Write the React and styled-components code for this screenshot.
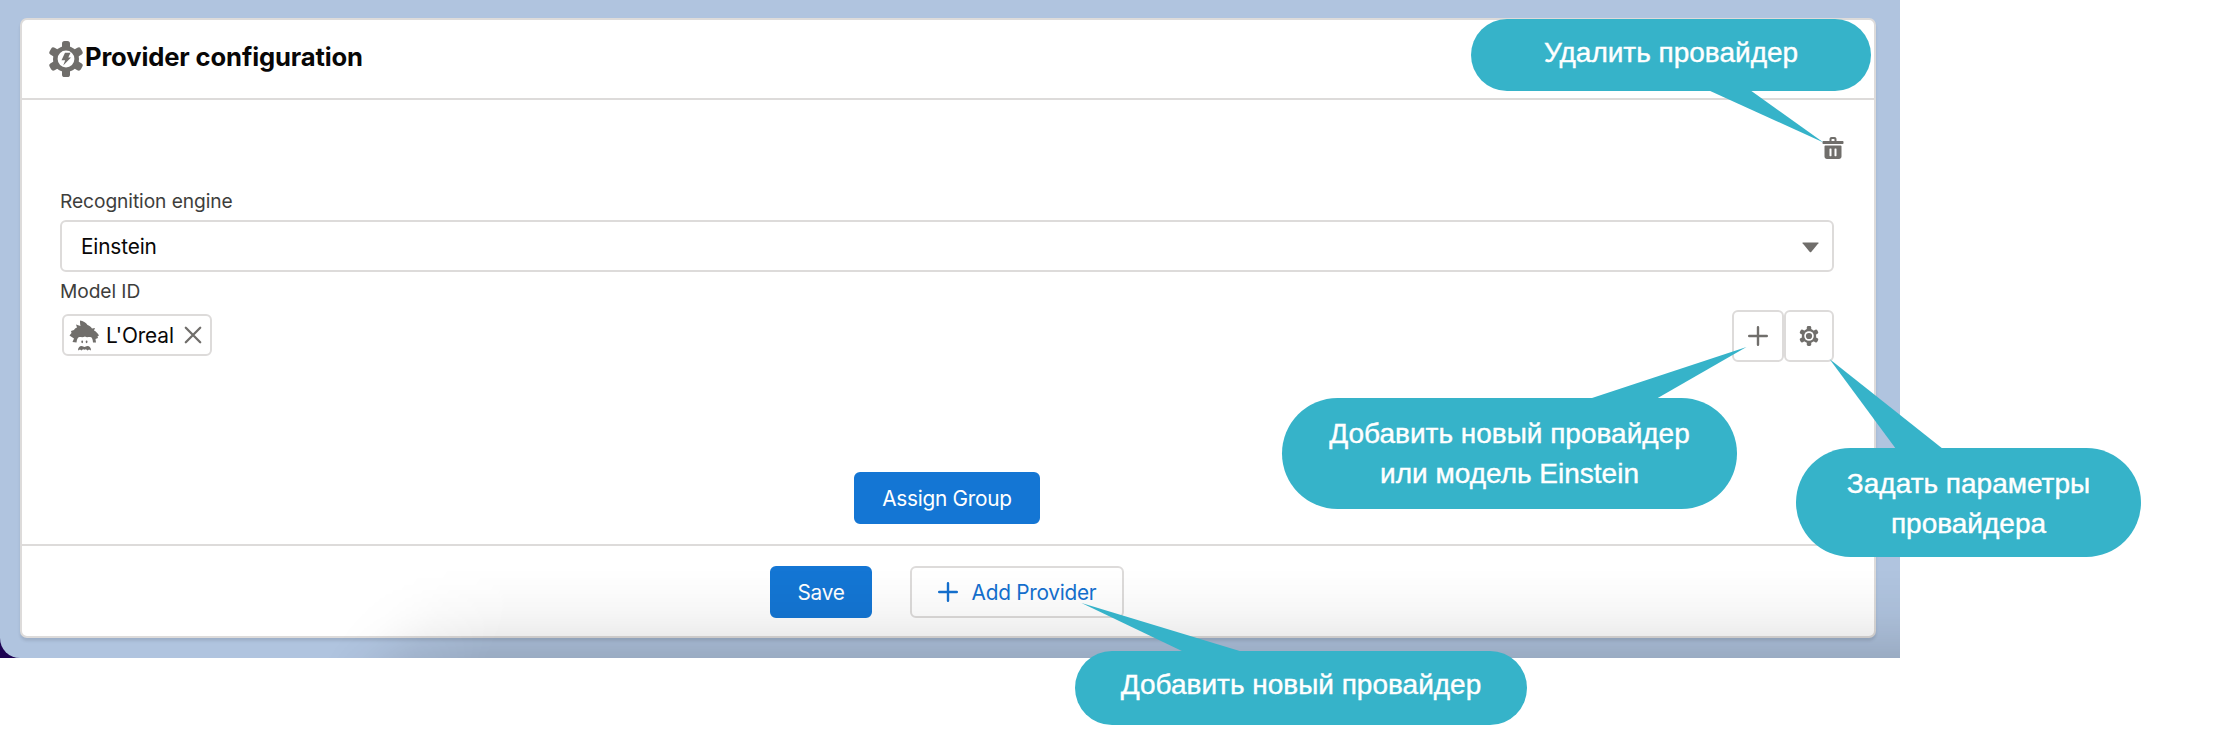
import React from "react";
import styled, { createGlobalStyle } from "styled-components";

const Global = createGlobalStyle`
  * { box-sizing: border-box; }
  body { margin: 0; background: #fff; }
`;

const Stage = styled.div`
  position: relative;
  width: 2222px;
  height: 752px;
  overflow: hidden;
  font-family: Inter, "Liberation Sans", sans-serif;
  color: #080707;
`;

const Backdrop = styled.div`
  position: relative;
  width: 1900px;
  height: 658px;
  background: #1d0352;
`;

const Page = styled.div`
  width: 1900px;
  height: 658px;
  padding: 18px 24px 20px 20px;
  background: #b0c4df;
  border-bottom-left-radius: 20px;
`;

const BottomShade = styled.div`
  position: absolute;
  left: 320px;
  right: 0;
  bottom: 0;
  height: 90px;
  background: linear-gradient(to bottom, rgba(0, 0, 0, 0), rgba(0, 0, 0, 0.012) 22%, rgba(0, 0, 0, 0.035) 50%, rgba(0, 0, 0, 0.075) 76%, rgba(0, 0, 0, 0.125));
  mask-image: linear-gradient(120deg, transparent 50px, rgba(0, 0, 0, 0.15) 80px, rgba(0, 0, 0, 0.65) 125px, #000 190px);
  pointer-events: none;
`;

const Card = styled.section`
  display: flex;
  flex-direction: column;
  height: 620px;
  background: #fff;
  border: 2px solid #dddbda;
  border-radius: 7px;
  box-shadow: 0 3px 3px rgba(0, 0, 0, 0.1);
`;

const Header = styled.header`
  display: flex;
  align-items: center;
  height: 80px;
  padding: 0 26px;
  border-bottom: 2px solid #dddbda;
`;

const Title = styled.h2`
  margin: 0 0 4px 1px;
  font-size: 25.6px;
  line-height: 32px;
  font-weight: 700;
  letter-spacing: -0.13px;
  white-space: nowrap;
`;

const Body = styled.div`
  display: flex;
  flex-direction: column;
  height: 446px;
  padding: 0 40px 0 38px;
  border-bottom: 2px solid #dddbda;
`;

const DeleteRow = styled.div`
  display: flex;
  justify-content: flex-end;
  height: 87px;
  padding-top: 36px;
  margin-right: -12px;
`;

const Label = styled.div`
  height: ${(p) => p.$height}px;
  line-height: ${(p) => p.$line}px;
  font-size: 19.2px;
  letter-spacing: -0.08px;
  color: #3e3e3c;
`;

const Select = styled.div`
  display: flex;
  align-items: center;
  justify-content: space-between;
  height: 52px;
  padding: 0 13px 0 19px;
  border: 2px solid #dddbda;
  border-radius: 6px;
  font-size: 20.8px;
  letter-spacing: -0.15px;
  svg { margin-top: 2px; }
`;

const ModelRow = styled.div`
  display: flex;
  justify-content: space-between;
`;

const Pill = styled.div`
  display: flex;
  align-items: center;
  width: 150px;
  height: 42px;
  margin: 4px 0 0 2px;
  padding-left: 5px;
  border: 2px solid #dddbda;
  border-radius: 6px;
`;

const PillText = styled.span`
  width: 78px;
  margin-left: 6px;
  font-size: 20.8px;
  letter-spacing: -0.1px;
  white-space: nowrap;
`;

const IconButtons = styled.div`
  display: flex;
`;

const IconButton = styled.button`
  display: flex;
  align-items: center;
  justify-content: center;
  width: ${(p) => p.$width}px;
  height: 52px;
  padding: 0;
  background: #fff;
  border: 2px solid #dddbda;
  border-radius: 6px;
`;

const Button = styled.button`
  display: flex;
  align-items: center;
  justify-content: center;
  gap: 14px;
  width: ${(p) => p.$width}px;
  height: 52px;
  padding: 0;
  border: 2px solid ${(p) => (p.$primary ? "#1476d4" : "#dddbda")};
  border-radius: 6px;
  background: ${(p) => (p.$primary ? "#1476d4" : "#fff")};
  color: ${(p) => (p.$primary ? "#fff" : "#1470cf")};
  font: 400 20.8px Inter, "Liberation Sans", sans-serif;
  letter-spacing: -0.26px;
  white-space: nowrap;
`;

const AssignRow = styled.div`
  display: flex;
  justify-content: center;
  margin-top: 110px;
`;

const Footer = styled.footer`
  display: flex;
  gap: 38px;
  height: 90px;
  padding: 20px 0 0 748px;
`;

const Bubble = styled.div`
  position: absolute;
  left: ${(p) => p.$x}px;
  top: ${(p) => p.$y}px;
  width: ${(p) => p.$w}px;
  height: ${(p) => p.$h}px;
  padding-top: ${(p) => p.$pad}px;
  border-radius: 56px;
  background: #36b3c9;
  color: #fff;
  font: 28px/40px "Liberation Sans", Arial, sans-serif;
  -webkit-text-stroke: 0.4px #fff;
  text-align: center;
  white-space: nowrap;
`;

const Tails = styled.svg`
  position: absolute;
  left: 0;
  top: 0;
  pointer-events: none;
`;

const GREY = "#706e6b";

function Gear({ size, hole, children }) {
  return (
    <svg width={size} height={size} viewBox="-18 -18 36 36" fill={GREY}>
      {[0, 60, 120].map((a) => (
        <rect key={a} x="-4" y="-18" width="8" height="36" rx="2.6" transform={`rotate(${a})`} />
      ))}
      <circle r="13" />
      <circle r={hole} fill="#fff" />
      {children}
    </svg>
  );
}

function Plus({ size, color }) {
  return (
    <svg width={size} height={size} viewBox="0 0 20 20" stroke={color} strokeWidth="2.4" strokeLinecap="round">
      <path d="M10 1.2V18.8M1.2 10H18.8" />
    </svg>
  );
}

function Trash() {
  return (
    <svg width="26" height="26" viewBox="0 0 52 52" fill={GREY}>
      <path
        fillRule="evenodd"
        d="M45.5 10H33V6c0-2.2-1.8-4-4-4h-6c-2.2 0-4 1.8-4 4v4H6.5C5.7 10 5 10.7 5 11.5v3c0 .8.7 1.5 1.5 1.5h39c.8 0 1.5-.7 1.5-1.5v-3c0-.8-.7-1.5-1.5-1.5zM23 7c0-.6.4-1 1-1h4c.6 0 1 .4 1 1v3h-6V7zM41.5 19h-31C9.7 19 9 19.7 9 20.5V41c0 2.8 2.2 5 5 5h24c2.8 0 5-2.2 5-5V20.5c0-.8-.7-1.5-1.5-1.5zM23 39.5c0 .6-.4 1-1 1h-2c-.6 0-1-.4-1-1V26c0-.6.4-1 1-1h2c.6 0 1 .4 1 1zm10 0c0 .6-.4 1-1 1h-2c-.6 0-1-.4-1-1V26c0-.6.4-1 1-1h2c.6 0 1 .4 1 1z"
      />
    </svg>
  );
}

function Einstein() {
  return (
    <svg width="31" height="31" viewBox="0 0 31 31" fill={GREY}>
      <path d="M11 .5C14 1 17 2.5 18.5 5C20 5.5 22 6.5 23 8.5L26 8L25 10.5C27 11.5 28.5 13 30 15.5L28.5 16.2L29 18L26.5 19L27 22.5H24C23.8 19 23 17 21 17C18.5 17 17.5 17.5 16 16.5C14 17.5 12.5 17 10.5 17C8.5 17.5 8 19 7.5 22.5L3.5 22L5 18.5L.5 15.5L2.5 13L2 11L5 10C5.5 9 6.5 8 8 7.5L7 4.5L11.5 6C11 4 11 2 11 .5Z" />
      <ellipse cx="13.2" cy="21.8" rx=".9" ry="1.4" />
      <ellipse cx="17.6" cy="21.8" rx=".9" ry="1.4" />
      <path d="M9 30.5C9 27.5 10.5 26 12.5 26C14 26 14.5 27 15.5 27C16.5 27 17 26 18.5 26C20.5 26 22 27.5 22 30.5L20 29.5L18.5 30.5L17 29.3L15.5 29.8L14 29.3L12.5 30.5L11 29.5Z" />
    </svg>
  );
}

export default function App() {
  return (
    <Stage>
      <Global />
      <Backdrop>
        <Page>
          <Card>
            <Header>
              <Gear size={36} hole={8.4}>
                <path d="M-1 -6.2H4.5L2.3 -1.5H5L-2.8 6.5L-.8 1.2H-4.5Z" />
              </Gear>
              <Title>Provider configuration</Title>
            </Header>
            <Body>
              <DeleteRow>
                <Trash />
              </DeleteRow>
              <Label $height={33} $line={29}>Recognition engine</Label>
              <Select>
                Einstein
                <svg width="17" height="11" viewBox="0 0 17 11" fill={GREY}>
                  <path d="M.8 .5H16.2Q16.8 .6 16.4 1.2L9.2 10Q8.5 10.7 7.8 10L.6 1.2Q.2 .6 .8 .5Z" />
                </svg>
              </Select>
              <Label $height={38} $line={38}>Model ID</Label>
              <ModelRow>
                <Pill>
                  <Einstein />
                  <PillText>L'Oreal</PillText>
                  <svg width="18" height="18" viewBox="0 0 18 18" stroke={GREY} strokeWidth="2.3" strokeLinecap="round">
                    <path d="M1.8 1.8L16.2 16.2M16.2 1.8L1.8 16.2" />
                  </svg>
                </Pill>
                <IconButtons>
                  <IconButton $width={52}>
                    <Plus size={20} color={GREY} />
                  </IconButton>
                  <IconButton $width={50}>
                    <Gear size={20} hole={8.6}>
                      <circle r="5.6" />
                    </Gear>
                  </IconButton>
                </IconButtons>
              </ModelRow>
              <AssignRow>
                <Button $primary $width={186}>Assign Group</Button>
              </AssignRow>
            </Body>
            <Footer>
              <Button $primary $width={102}>Save</Button>
              <Button $width={214}>
                <Plus size={20} color="#1470cf" />
                Add Provider
              </Button>
            </Footer>
          </Card>
        </Page>
        <BottomShade />
      </Backdrop>
      <Tails width="2222" height="752" fill="#36b3c9">
        <path d="M1708 90L1823.5 142.5L1750 90Z" />
        <path d="M1589 399L1746.5 347L1656 399Z" />
        <path d="M1896 449L1829.5 359L1943 449Z" />
        <path d="M1184 652L1081.5 603L1243 652Z" />
      </Tails>
      <Bubble $x={1471} $y={19} $w={400} $h={72} $pad={14}>Удалить провайдер</Bubble>
      <Bubble $x={1282} $y={398} $w={455} $h={111} $pad={16}>
        Добавить новый провайдер
        <br />
        или модель Einstein
      </Bubble>
      <Bubble $x={1796} $y={448} $w={345} $h={109} $pad={16}>
        Задать параметры
        <br />
        провайдера
      </Bubble>
      <Bubble $x={1075} $y={651} $w={452} $h={74} $pad={14}>Добавить новый провайдер</Bubble>
    </Stage>
  );
}
